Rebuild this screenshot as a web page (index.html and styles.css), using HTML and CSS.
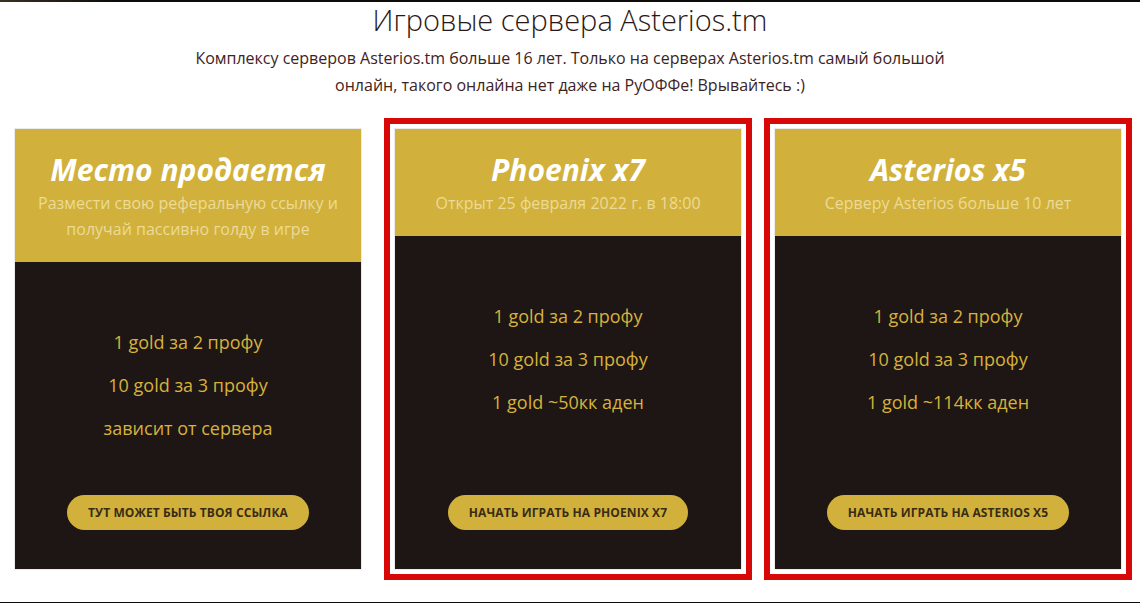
FILE: index.html
```html
<!DOCTYPE html>
<html lang="ru">
<head>
<meta charset="utf-8">
<title>Игровые сервера Asterios.tm</title>
<link rel="stylesheet" href="styles.css">
</head>
<body>
<div class="topbar"></div>
<section class="servers">
  <h1 class="servers__title">Игровые сервера Asterios.tm</h1>
  <p class="servers__lead">Комплексу серверов Asterios.tm больше 16 лет. Только на серверах Asterios.tm самый большой<br>онлайн, такого онлайна нет даже на РуОФФе! Врывайтесь :)</p>
  <div class="cards">
    <div class="card">
      <div class="card__head">
        <h2 class="card__name">Место продается</h2>
        <p class="card__sub">Размести свою реферальную ссылку и<br>получай пассивно голду в игре</p>
      </div>
      <div class="card__body">
        <ul class="card__list">
          <li>1 gold за 2 профу</li>
          <li>10 gold за 3 профу</li>
          <li>зависит от сервера</li>
        </ul>
        <a class="btn" href="#">Тут может быть твоя ссылка</a>
      </div>
    </div>
    <div class="card card--marked">
      <div class="card__head">
        <h2 class="card__name">Phoenix x7</h2>
        <p class="card__sub">Открыт 25 февраля 2022 г. в 18:00</p>
      </div>
      <div class="card__body">
        <ul class="card__list">
          <li>1 gold за 2 профу</li>
          <li>10 gold за 3 профу</li>
          <li>1 gold ~50кк аден</li>
        </ul>
        <a class="btn" href="#">Начать играть на Phoenix x7</a>
      </div>
    </div>
    <div class="card card--marked">
      <div class="card__head">
        <h2 class="card__name">Asterios x5</h2>
        <p class="card__sub">Серверу Asterios больше 10 лет</p>
      </div>
      <div class="card__body">
        <ul class="card__list">
          <li>1 gold за 2 профу</li>
          <li>10 gold за 3 профу</li>
          <li>1 gold ~114кк аден</li>
        </ul>
        <a class="btn" href="#">Начать играть на Asterios x5</a>
      </div>
    </div>
  </div>
</section>
<div class="bottomline"></div>
</body>
</html>
```
FILE: styles.css
```css
html, body {
  margin: 0;
  padding: 0;
  background: #ffffff;
}
body {
  font-family: "Open Sans", "Liberation Sans", sans-serif;
  color: #2a1c1c;
  overflow: hidden;
}
.topbar {
  height: 2px;
  background: linear-gradient(90deg, #3a3024 0%, #0e0b08 10%, #0e0b08 100%);
}
.servers {
  height: 600px;
  box-sizing: border-box;
  display: flex;
  flex-direction: column;
  align-items: center;
}
.servers__title {
  margin: 0;
  font-size: 29px;
  line-height: 36px;
  font-weight: 300;
  color: #2a1818;
  text-align: center;
}
.servers__lead {
  margin: 7px 0 0;
  font-size: 16px;
  line-height: 27px;
  font-weight: 400;
  color: #3e2323;
  text-align: center;
}
.cards {
  align-self: stretch;
  margin-top: 29px;
  padding-left: 14px;
  display: flex;
  gap: 32px;
}
.card {
  width: 348px;
  height: 442px;
  box-sizing: border-box;
  border: 1px solid #ebebeb;
  display: flex;
  flex-direction: column;
  background: #1e1614;
}
.card--marked {
  outline: 6px solid #d80808;
  outline-offset: 4px;
}
.card__head {
  background: #d1b13b;
  padding: 21px 12px 20px;
  text-align: center;
}
.card__name {
  margin: 0;
  font-size: 30px;
  line-height: 40px;
  font-weight: 700;
  font-style: italic;
  color: #ffffff;
}
.card__sub {
  margin: 0;
  font-size: 16px;
  line-height: 26px;
  color: #ecda98;
}
.card__body {
  flex: 1;
  display: flex;
  flex-direction: column;
  align-items: center;
  padding: 67px 12px 39px;
}
.card__list {
  list-style: none;
  margin: 0;
  padding: 0;
  display: flex;
  flex-direction: column;
  gap: 17px;
  text-align: center;
}
.card__list li {
  font-size: 18px;
  line-height: 26px;
  color: #d6b23c;
}
.btn {
  margin-top: auto;
  display: inline-block;
  height: 35px;
  line-height: 35px;
  padding: 0 21px;
  border-radius: 18px;
  background: #d1b13b;
  color: #3a2c14;
  font-size: 12px;
  font-weight: 700;
  text-transform: uppercase;
  text-decoration: none;
  letter-spacing: 0.1px;
}
.bottomline {
  height: 1px;
  background: #0e0b08;
}
```
